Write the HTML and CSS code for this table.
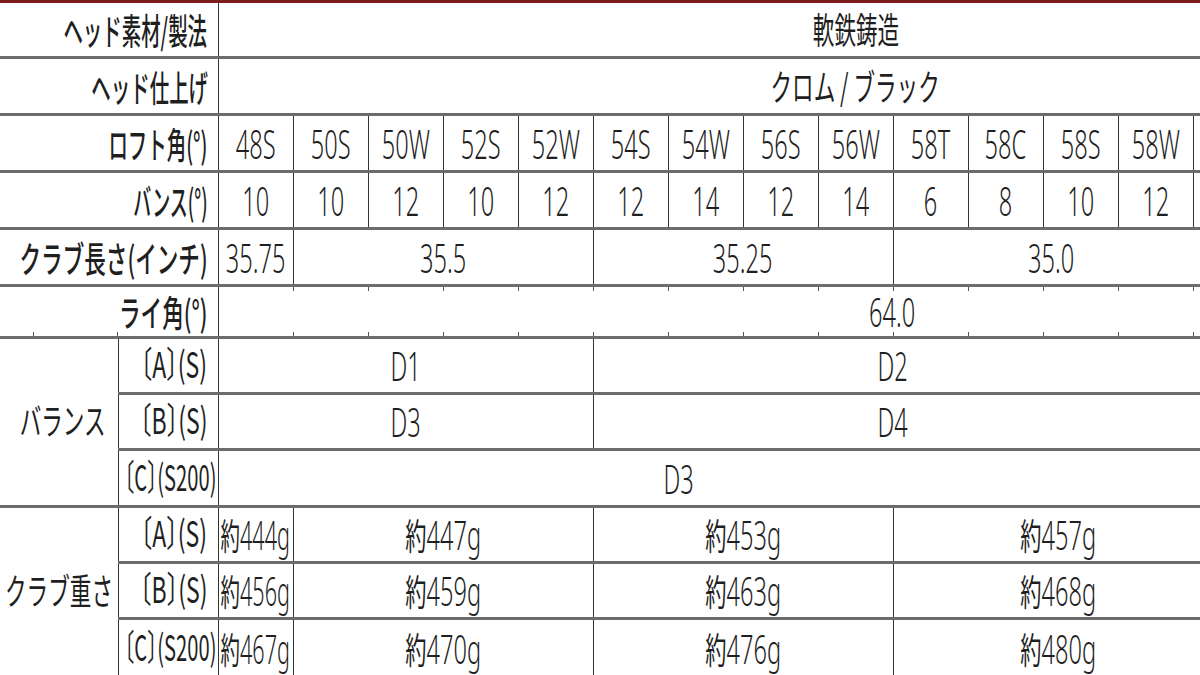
FILE: index.html
```html
<!DOCTYPE html>
<html lang="ja">
<head>
<meta charset="utf-8">
<title>スペック</title>
<link rel="stylesheet" href="styles.css">
</head>
<body>
<div class="topline"></div>
<table class="spec">
  <colgroup>
    <col class="cg"><col class="cs">
    <col class="cd"><col class="cd"><col class="cd"><col class="cd"><col class="cd"><col class="cd"><col class="cd"><col class="cd"><col class="cd"><col class="cd"><col class="cd"><col class="cd"><col class="cd"><col class="cd"><col class="cd"><col class="cd"><col class="cd">
  </colgroup>
  <tr class="r1">
    <th class="lbl nl" colspan="2"><span class="t s53">ヘッド素材/製法</span></th>
    <td colspan="17"><span class="t j">軟鉄鋳造</span></td>
  </tr>
  <tr class="r2">
    <th class="lbl nl" colspan="2"><span class="t s53">ヘッド仕上げ</span></th>
    <td colspan="17"><span class="t j">クロム / ブラック</span></td>
  </tr>
  <tr class="r3">
    <th class="lbl nl" colspan="2"><span class="t s53">ロフト角(°)</span></th>
    <td><span class="t">48S</span></td><td><span class="t">50S</span></td><td><span class="t">50W</span></td><td><span class="t">52S</span></td><td><span class="t">52W</span></td><td><span class="t">54S</span></td><td><span class="t">54W</span></td><td><span class="t">56S</span></td><td><span class="t">56W</span></td><td><span class="t">58T</span></td><td><span class="t">58C</span></td><td><span class="t">58S</span></td><td><span class="t">58W</span></td><td></td><td></td><td></td><td></td>
  </tr>
  <tr class="r4">
    <th class="lbl nl" colspan="2"><span class="t s50">バンス(°)</span></th>
    <td><span class="t">10</span></td><td><span class="t">10</span></td><td><span class="t">12</span></td><td><span class="t">10</span></td><td><span class="t">12</span></td><td><span class="t">12</span></td><td><span class="t">14</span></td><td><span class="t">12</span></td><td><span class="t">14</span></td><td><span class="t">6</span></td><td><span class="t">8</span></td><td><span class="t">10</span></td><td><span class="t">12</span></td><td></td><td></td><td></td><td></td>
  </tr>
  <tr class="r5">
    <th class="lbl nl" colspan="2"><span class="t s60">クラブ長さ(インチ)</span></th>
    <td><span class="t">35.75</span></td>
    <td colspan="4"><span class="t">35.5</span></td>
    <td colspan="4"><span class="t">35.25</span></td>
    <td colspan="8" class="len-last"><span class="t">35.0</span></td>
  </tr>
  <tr class="r6">
    <th class="lbl nl lie-lbl" colspan="2"><span class="t s60">ライ角(°)</span></th>
    <td colspan="17" class="lie"><span class="t">64.0</span></td>
  </tr>
  <tr class="r7">
    <th rowspan="3" class="grp nl"><span class="t j g1">バランス</span></th>
    <th class="sub"><span class="t j ab">〔A〕(S)</span></th>
    <td colspan="5"><span class="t">D1</span></td>
    <td colspan="12" class="bal-right"><span class="t">D2</span></td>
  </tr>
  <tr class="r8">
    <th class="sub"><span class="t j ab">〔B〕(S)</span></th>
    <td colspan="5"><span class="t">D3</span></td>
    <td colspan="12" class="bal-right"><span class="t">D4</span></td>
  </tr>
  <tr class="r9">
    <th class="sub"><span class="t j cs200">〔C〕(S200)</span></th>
    <td colspan="17" class="bal-all"><span class="t">D3</span></td>
  </tr>
  <tr class="r10">
    <th rowspan="3" class="grp nl"><span class="t j g2">クラブ重さ</span></th>
    <th class="sub"><span class="t j ab">〔A〕(S)</span></th>
    <td><span class="t nw"><span class="k">約</span>444g</span></td>
    <td colspan="4"><span class="t"><span class="k">約</span>447g</span></td>
    <td colspan="4"><span class="t"><span class="k">約</span>453g</span></td>
    <td colspan="8" class="wt-last"><span class="t"><span class="k">約</span>457g</span></td>
  </tr>
  <tr class="r11">
    <th class="sub"><span class="t j ab">〔B〕(S)</span></th>
    <td><span class="t nw"><span class="k">約</span>456g</span></td>
    <td colspan="4"><span class="t"><span class="k">約</span>459g</span></td>
    <td colspan="4"><span class="t"><span class="k">約</span>463g</span></td>
    <td colspan="8" class="wt-last"><span class="t"><span class="k">約</span>468g</span></td>
  </tr>
  <tr class="r12">
    <th class="sub"><span class="t j cs200">〔C〕(S200)</span></th>
    <td><span class="t nw"><span class="k">約</span>467g</span></td>
    <td colspan="4"><span class="t"><span class="k">約</span>470g</span></td>
    <td colspan="4"><span class="t"><span class="k">約</span>476g</span></td>
    <td colspan="8" class="wt-last"><span class="t"><span class="k">約</span>480g</span></td>
  </tr>
</table>
</body>
</html>
```

FILE: styles.css
```css
html, body {
  margin: 0;
  padding: 0;
  background: #ffffff;
}
body {
  width: 1200px;
  height: 675px;
  overflow: hidden;
  font-family: "Noto Sans", "Noto Sans CJK JP", sans-serif;
  color: #1f1f1f;
}
.topline {
  height: 3px;
  background: #7d1c1c;
}
.spec {
  border-collapse: collapse;
  table-layout: fixed;
  width: 1493px;
  font-size: 40px;
  line-height: 1;
  font-feature-settings: "halt";
}
.cg { width: 118px; }
.cs { width: 100px; }
.cd { width: 75px; }

.spec th,
.spec td {
  padding: 0;
  border-left: 1px solid #333;
  border-right: 1px solid #333;
  border-bottom: 3px solid #6c6c6c;
  text-align: center;
  vertical-align: middle;
  white-space: nowrap;
  font-weight: 350;
  overflow: visible;
}
.spec .nl { border-left: none; }

/* data text (latin digits) */
.t {
  display: inline-block;
  transform: translateY(1px) scaleX(0.59);
  transform-origin: center;
  margin: 0 -40px;
}
.t.nw { transform: translateY(1px) scaleX(0.54); }
.k {
  font-family: "Noto Sans CJK JP", sans-serif;
  font-size: 36px;
  font-weight: 400;
}
/* japanese text */
.t.j {
  font-family: "Noto Sans CJK JP", sans-serif;
  font-size: 36px;
  font-weight: 400;
  transform: translateY(0) scaleX(0.6);
}
.t.ab { transform: translateY(-2px) translateX(6px) scaleX(0.64); }
.t.cs200 { transform: translateY(-2px) translateX(2px) scaleX(0.56); }
.grp .t.g1 { transform: translateY(-2px) translateX(4px) scaleX(0.6); }
.grp .t.g2 { transform: translateY(-2px) scaleX(0.6); }

.spec .lbl {
  text-align: right;
  padding-right: 10px;
  font-weight: 500;
  font-size: 36px;
  font-family: "Noto Sans CJK JP", sans-serif;
}
.lbl .t {
  transform-origin: right center;
  margin: 0 0 0 -200px;
}
.lbl .s50 { transform: translateY(0) scaleX(0.5); }
.lbl .s53 { transform: translateY(0) scaleX(0.54); }
.lbl .s60 { transform: translateY(0) scaleX(0.6); }

.r1 { height: 54px; }
.r2, .r3, .r4, .r5 { height: 57px; }
.r6 { height: 52px; }
.r7, .r8 { height: 56px; }
.r9 { height: 57px; }
.r10, .r11 { height: 56px; }
.r12 { height: 60px; }

.spec .len-last { padding-right: 284px; }
.spec .wt-last { padding-right: 270px; }
.spec .bal-right { padding-right: 300px; }
.spec .bal-all { padding-right: 353px; }
.spec .lie { padding-left: 74px; }

.spec .lie {
  background-image:
    repeating-linear-gradient(90deg, transparent 0 74px, #555 74px 75px),
    repeating-linear-gradient(90deg, transparent 0 74px, #555 74px 75px);
  background-size: 100% 4px, 100% 4px;
  background-position: left top, left bottom;
  background-repeat: no-repeat;
}
.spec .lie-lbl {
  background-image:
    linear-gradient(#555, #555),
    linear-gradient(#555, #555);
  background-size: 1px 4px, 1px 4px;
  background-position: 33px bottom, 117px bottom;
  background-repeat: no-repeat;
}
```
